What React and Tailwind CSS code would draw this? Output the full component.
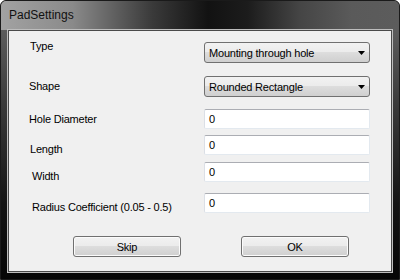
import React from 'react';

const labelCls = "text-[11px] leading-[14px] tracking-[-0.2px] text-black whitespace-nowrap";

const Combo = ({ value }) => (
  <div className="w-[166px] h-[21px] flex items-center justify-between border border-[#707070] rounded-[3px] bg-[linear-gradient(180deg,#f2f2f2_0%,#ebebeb_50%,#dddddd_50%,#cfcfcf_100%)] pl-[4px] pr-[4px]">
    <span className={labelCls}>{value}</span>
    <svg width="7" height="4" viewBox="0 0 7 4">
      <path d="M0 0 H7 L3.5 4 Z" fill="#000" />
    </svg>
  </div>
);

const TextBox = ({ value }) => (
  <div className="w-[166px] h-[20px] flex items-center bg-white border border-[#e3e9ef] border-t-[#abadb3] border-l-[#dbdfe6] rounded-[2px] pl-[4px]">
    <span className={labelCls}>{value}</span>
  </div>
);

const Row = ({ label, labelTop, labelLeft, mt, children }) => (
  <div className={`flex items-start ${mt}`}>
    <div className={`w-[195px] ${labelLeft}`}>
      <div className={`${labelCls} ${labelTop}`}>{label}</div>
    </div>
    {children}
  </div>
);

const Button = ({ children }) => (
  <div className="w-[108px] h-[21px] flex items-center justify-center border border-[#707070] rounded-[3px] bg-[linear-gradient(180deg,#f2f2f2_0%,#ebebeb_50%,#dddddd_50%,#cfcfcf_100%)] shadow-[inset_0_0_0_1px_#fbfbfb]">
    <span className={labelCls}>{children}</span>
  </div>
);

export default function App() {
  return (
    <div className="w-[400px] h-[280px] bg-white" style={{ fontFamily: '"Liberation Sans", Arial, sans-serif' }}>
      <div className="w-full h-full flex flex-col rounded-t-[6px] overflow-hidden border border-[#1a1a1a] bg-black shadow-[inset_0_0_0_1px_#6e6e6e]">
        <div className="h-[29px] px-[8px] pt-[7px] text-[12px] leading-[14px] text-[#111] bg-[linear-gradient(90deg,#a2a2a2_0%,#8a8a8a_18%,#3a3a3a_38%,#121212_52%,#1c1c1c_62%,#454545_75%,#5a5a5a_88%,#5c5c5c_100%)]">
          PadSettings
        </div>
        <div className="flex-1 px-[7px] pb-[7px] bg-[linear-gradient(180deg,#5c5c5c_0%,#3a3a3a_30%,#141414_70%,#050505_100%)]">
          <div className="h-full bg-[#f0f0f0] border border-[#4a4a4a] shadow-[0_0_0_1px_#bdbdbd] flex flex-col">
            <Row label="Type" labelTop="mt-[-3px]" labelLeft="pl-[21px]" mt="mt-[11px]">
              <Combo value="Mounting through hole" />
            </Row>
            <Row label="Shape" labelTop="mt-[3px]" labelLeft="pl-[20px]" mt="mt-[13px]">
              <Combo value="Rounded Rectangle" />
            </Row>
            <Row label="Hole Diameter" labelTop="mt-[3px]" labelLeft="pl-[20px]" mt="mt-[12px]">
              <TextBox value="0" />
            </Row>
            <Row label="Length" labelTop="mt-[7px]" labelLeft="pl-[21px]" mt="mt-[6px]">
              <TextBox value="0" />
            </Row>
            <Row label="Width" labelTop="mt-[7px]" labelLeft="pl-[23px]" mt="mt-[6px]">
              <TextBox value="0" />
            </Row>
            <Row label="Radius Coefficient (0.05 - 0.5)" labelTop="mt-[7px]" labelLeft="pl-[23px]" mt="mt-[10px]">
              <TextBox value="0" />
            </Row>
            <div className="flex gap-[60px] pl-[64px] mt-[22px]">
              <Button>Skip</Button>
              <Button>OK</Button>
            </div>
          </div>
        </div>
      </div>
    </div>
  );
}
